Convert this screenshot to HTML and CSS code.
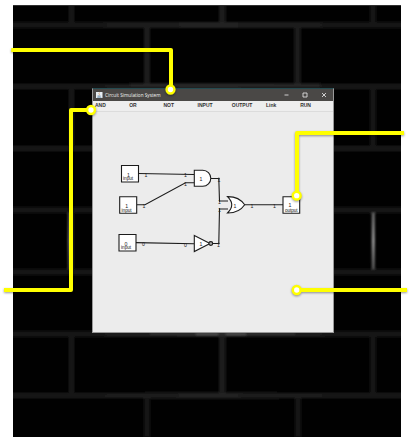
FILE: index.html
```html
<!DOCTYPE html>
<html lang="en">
<head>
<meta charset="utf-8">
<title>Circuit Simulation System</title>
<link rel="stylesheet" href="styles.css">
</head>
<body>
<main class="wall">
  <svg class="bricks" viewBox="13 5 388 432" aria-hidden="true">
    <defs>
      <filter id="soft" x="-5%" y="-5%" width="110%" height="110%"><feGaussianBlur stdDeviation=".9"/></filter>
      <linearGradient id="row" gradientUnits="userSpaceOnUse" x1="13" y1="0" x2="401" y2="0">
        <stop offset="0" stop-color="#121212"/><stop offset=".5" stop-color="#222"/><stop offset="1" stop-color="#141414"/>
      </linearGradient>
      <linearGradient id="shine" x1="0" y1="0" x2="0" y2="1">
        <stop offset="0" stop-color="#666"/><stop offset=".5" stop-color="#999"/><stop offset="1" stop-color="#555"/>
      </linearGradient>
    </defs>
    <g filter="url(#soft)">
      <path fill="#121212" d="M68.500 5h6v18h-6zM370 5h6v18h-6zM68.500 89h6v57h-6zM370 89h6v57h-6zM68.500 212h6v58h-6zM68.500 336h6v57h-6zM370 336h6v57h-6zM144 398h6v39h-6zM295 398h6v39h-6z"/>
      <path fill="#1e1e1e" d="M219 5h6.500v18H219zM144 28h6v56h-6zM294.500 28h6v56h-6zM219 334h6.500v59H219z"/>
      <g fill="url(#row)">
        <path d="M10 22h394v6H10zM10 83.500h394v6H10zM10 145.500h394v6H10zM10 207h394v6H10zM10 269h394v6H10zM10 331h394v6H10zM10 392.500h394v6H10z"/>
      </g>
      <path fill="#303030" d="M130 84h190v1.500H130zM150 333h145v2H150z"/>
      <path fill="#666" d="M196 333.500h22v1.300h-22zM226 333.500h20v1.300h-20z"/>
      <path fill="url(#shine)" d="M371.800 213h3v56h-3zM68 213h1.500v56H68z"/>
    </g>
    <path d="M13 5.500h388" stroke="#303030"/>
  </svg>

  <section class="window">
    <header class="titlebar">
      <svg class="java" viewBox="0 0 7 7" aria-hidden="true">
        <path fill="#e7eef4" d="M0 0h7v7H0z"/>
        <path d="M3.800.5C2 2 4.700 2.200 3.200 3.800" fill="none" stroke="#d99a63" stroke-width=".8"/>
        <path d="M1.500 4.300h3.600M1.800 5.200h3M1.200 6.200h4.600" stroke="#6489aa" stroke-width=".7"/>
      </svg>
      <h1 class="title">Circuit Simulation System</h1>
      <svg class="controls" viewBox="0 0 54 12" aria-hidden="true">
        <path d="M4.500 6h4M23 4h4v4h-4zM42 4l4 4M46 4l-4 4" fill="none" stroke="#dedede" stroke-width=".9"/>
      </svg>
    </header>
    <nav class="menu">
      <span>AND</span><span>OR</span><span>NOT</span><span>INPUT</span><span>OUTPUT</span><span>Link</span><span>RUN</span>
    </nav>
    <svg class="canvas" viewBox="93 112 240 219.500">
      <g class="shape">
        <path d="M138.500 173.500L194 174.500M137 204.800h8L185.500 182.800H194M136 242.600L194 243.700M211 178.500h7.800L219.500 201H228M213 243.500h5.800L219.500 209H228M244.500 204.800H283"/>
        <path class="solid" d="M121.500 165.500h17v16.500h-17zM119.700 196.700h17v16.500h-17zM119 234.500h17V251h-17zM283 196.700h16.700v16.500H283z"/>
        <path class="solid" d="M194.300 170.300h8.500a8 8 0 0 1 0 16h-8.500zM194.300 235.500L210 243.500L194.300 251.500zM227.500 196.600q11.500-.2 17.200 8.200q-5.700 8.400-17.200 8.200q8.500-8.200 0-16.400z"/>
        <circle cx="210.800" cy="243.500" r="1.900" fill="#aaa"/>
        <path d="M218 178.500h1.500M219 201h1M219 209h1M218 243.500h1.500" stroke-width="1.500"/>
      </g>
      <g class="value">
        <text x="128.500" y="176.500">1</text><text x="126.800" y="207.600">1</text><text x="126" y="245.500">0</text>
        <text x="201" y="181.300">1</text><text x="201" y="246.200">1</text><text x="235" y="207.500">1</text><text x="290" y="207.300">1</text>
        <text x="146" y="176.500">1</text><text x="185.500" y="177">1</text><text x="185.500" y="185.500">1</text><text x="144" y="207.500">1</text>
        <text x="143.500" y="246">0</text><text x="185.500" y="247">0</text>
        <text x="219" y="181.500">1</text><text x="219.500" y="203.500">1</text><text x="219.500" y="212">1</text><text x="218.500" y="247">1</text>
        <text x="252" y="207.800">1</text><text x="274.500" y="207.800">1</text>
      </g>
      <g class="label">
        <text x="123" y="180">input</text><text x="121.500" y="211.500">input</text><text x="121" y="249.200">input</text><text x="285" y="211.500" textLength="12.500">output</text>
      </g>
    </svg>
  </section>
</main>

<svg class="callouts" viewBox="0 0 411 438" aria-hidden="true">
  <g class="leader">
    <path d="M11.200 50H171V85"/>
    <path d="M4 290H71V110H87"/>
    <path d="M404 133H297V191"/>
    <path d="M407 290H301"/>
  </g>
  <g class="pin">
    <circle cx="170.500" cy="89.500" r="3.900"/><circle cx="91" cy="110" r="3.900"/>
    <circle cx="296.700" cy="195.700" r="3.900"/><circle cx="296.700" cy="290" r="3.900"/>
  </g>
</svg>
</body>
</html>
```
FILE: styles.css
```css
* { box-sizing: border-box; }

body {
  margin: 0;
  position: relative;
  width: 411px;
  height: 438px;
  padding: 5px 10px 1px 13px;
  overflow: hidden;
  background: #fff;
  font-family: "Liberation Sans", Arial, sans-serif;
}

.wall {
  position: relative;
  width: 388px;
  height: 432px;
  padding: 83px 0 0 79px;
  background: #010101;
  overflow: hidden;
}

.bricks {
  position: absolute;
  inset: 0;
  width: 100%;
  height: 100%;
}

.window {
  position: relative;
  display: flex;
  flex-direction: column;
  width: 242px;
  height: 244.500px;
  border: 1px solid #999;
  border-top: 1px solid #244b50;
  background: #ececec;
}

.titlebar {
  display: flex;
  align-items: center;
  flex: none;
  height: 12px;
  padding-left: 3px;
  background: #4a4846;
}

.java { width: 6.500px; height: 6.500px; }

.title {
  margin: 0 0 0 2.500px;
  font: 4.700px/12px "Open Sans", sans-serif;
  color: #f2f2f2;
  white-space: nowrap;
}

.controls { width: 54px; height: 12px; margin-left: auto; margin-right: -.5px; }

.menu {
  display: grid;
  grid-template-columns: repeat(7, 34.200px);
  flex: none;
  height: 10.500px;
  padding-left: 2px;
  border-bottom: 1px solid #dcdcdc;
  background: #eee;
  color: #333;
  font-size: 5px;
  font-weight: bold;
  line-height: 9px;
}

.canvas { flex: none; width: 240px; height: 219.500px; }

.shape { fill: none; stroke: #1c1c1c; stroke-width: 1.100; }
.shape .solid { fill: #fff; }
.value { fill: #222; font-size: 5.200px; text-anchor: middle; }
.label { fill: #111; font-size: 4.700px; }

.callouts {
  position: absolute;
  inset: 0;
  width: 411px;
  height: 438px;
  filter: drop-shadow(0 1.500px 1px rgba(0, 0, 0, .4));
}

.leader { fill: none; stroke: #ff0; stroke-width: 4; stroke-linejoin: round; }
.pin { fill: #fff; stroke: #ff0; stroke-width: 2.500; }
```
